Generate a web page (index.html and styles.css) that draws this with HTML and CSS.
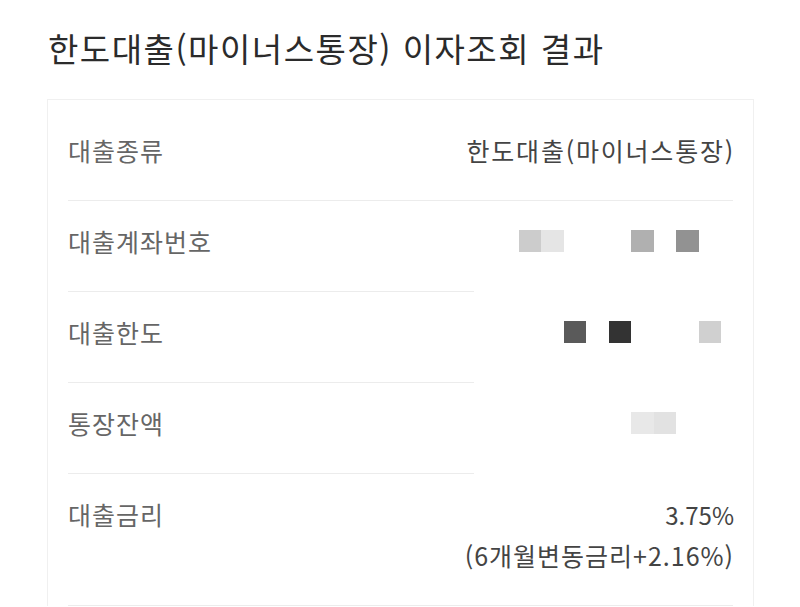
FILE: index.html
```html
<!DOCTYPE html>
<html lang="ko">
<head>
<meta charset="utf-8">
<title>한도대출(마이너스통장) 이자조회 결과</title>
<link rel="stylesheet" href="styles.css">
</head>
<body>
<main class="page">
  <h1 class="title">한도대출(마이너스통장) 이자조회 결과</h1>
  <section class="card">
    <div class="row">
      <div class="label">대출종류</div>
      <div class="value wide">한도대출(마이너스통장)</div>
    </div>
    <div class="row masked">
      <div class="label">대출계좌번호</div>
      <div class="mosaic">
        <span class="px" style="background:#cccccc"></span>
        <span class="px" style="background:#e5e5e5"></span>
        <span class="px"></span>
        <span class="px"></span>
        <span class="px"></span>
        <span class="px" style="background:#b0b0b0"></span>
        <span class="px"></span>
        <span class="px" style="background:#929292"></span>
        <span class="px"></span>
      </div>
    </div>
    <div class="row masked">
      <div class="label">대출한도</div>
      <div class="mosaic">
        <span class="px"></span>
        <span class="px"></span>
        <span class="px" style="background:#5a5a5a"></span>
        <span class="px"></span>
        <span class="px" style="background:#333333"></span>
        <span class="px"></span>
        <span class="px"></span>
        <span class="px"></span>
        <span class="px" style="background:#d0d0d0"></span>
      </div>
    </div>
    <div class="row masked">
      <div class="label">통장잔액</div>
      <div class="mosaic">
        <span class="px"></span>
        <span class="px"></span>
        <span class="px"></span>
        <span class="px"></span>
        <span class="px"></span>
        <span class="px" style="background:#e8e8e8"></span>
        <span class="px" style="background:#e2e2e2"></span>
        <span class="px"></span>
        <span class="px"></span>
      </div>
    </div>
    <div class="row">
      <div class="label">대출금리</div>
      <div class="value"><span class="num">3.75%</span><br>(6개월변동금리+2.16%)</div>
    </div>
  </section>
</main>
</body>
</html>
```
FILE: styles.css
```css
html, body {
  margin: 0;
  padding: 0;
  background: #ffffff;
}

body {
  font-family: "Noto Sans CJK KR", "Noto Sans", sans-serif;
  color: #333333;
}

.page {
  padding: 28px 46px 0 47px;
}

.title {
  margin: 0 0 31px 1px;
  font-size: 33px;
  line-height: 40px;
  font-weight: 400;
  color: #2b2b2b;
  letter-spacing: 1.5px;
  white-space: nowrap;
}

.card {
  border: 1px solid #f0f0f0;
  border-bottom: none;
  padding: 10px 20px 0 20px;
}

.row {
  display: flex;
  justify-content: space-between;
  align-items: flex-start;
  padding: 20px 0 30px 0;
  border-bottom: 1px solid #ececec;
  font-size: 25px;
  line-height: 40px;
  letter-spacing: 1px;
}

.row.masked {
  border-bottom-color: transparent;
  background-image: linear-gradient(#ececec, #ececec);
  background-origin: border-box;
  background-position: left bottom;
  background-size: 406px 1px;
  background-repeat: no-repeat;
}

.label {
  color: #666666;
  white-space: nowrap;
}

.value {
  color: #444444;
  text-align: right;
  white-space: nowrap;
  margin-right: -1px;
}

.value.wide {
  letter-spacing: 1.8px;
  margin-right: -2px;
}

.num {
  letter-spacing: 0;
  font-size: 24px;
}

.mosaic {
  display: grid;
  grid-template-columns: repeat(9, 22.5px);
  height: 22px;
  margin: 9px 12px 0 0;
}

.px {
  display: block;
  height: 22px;
}
```
